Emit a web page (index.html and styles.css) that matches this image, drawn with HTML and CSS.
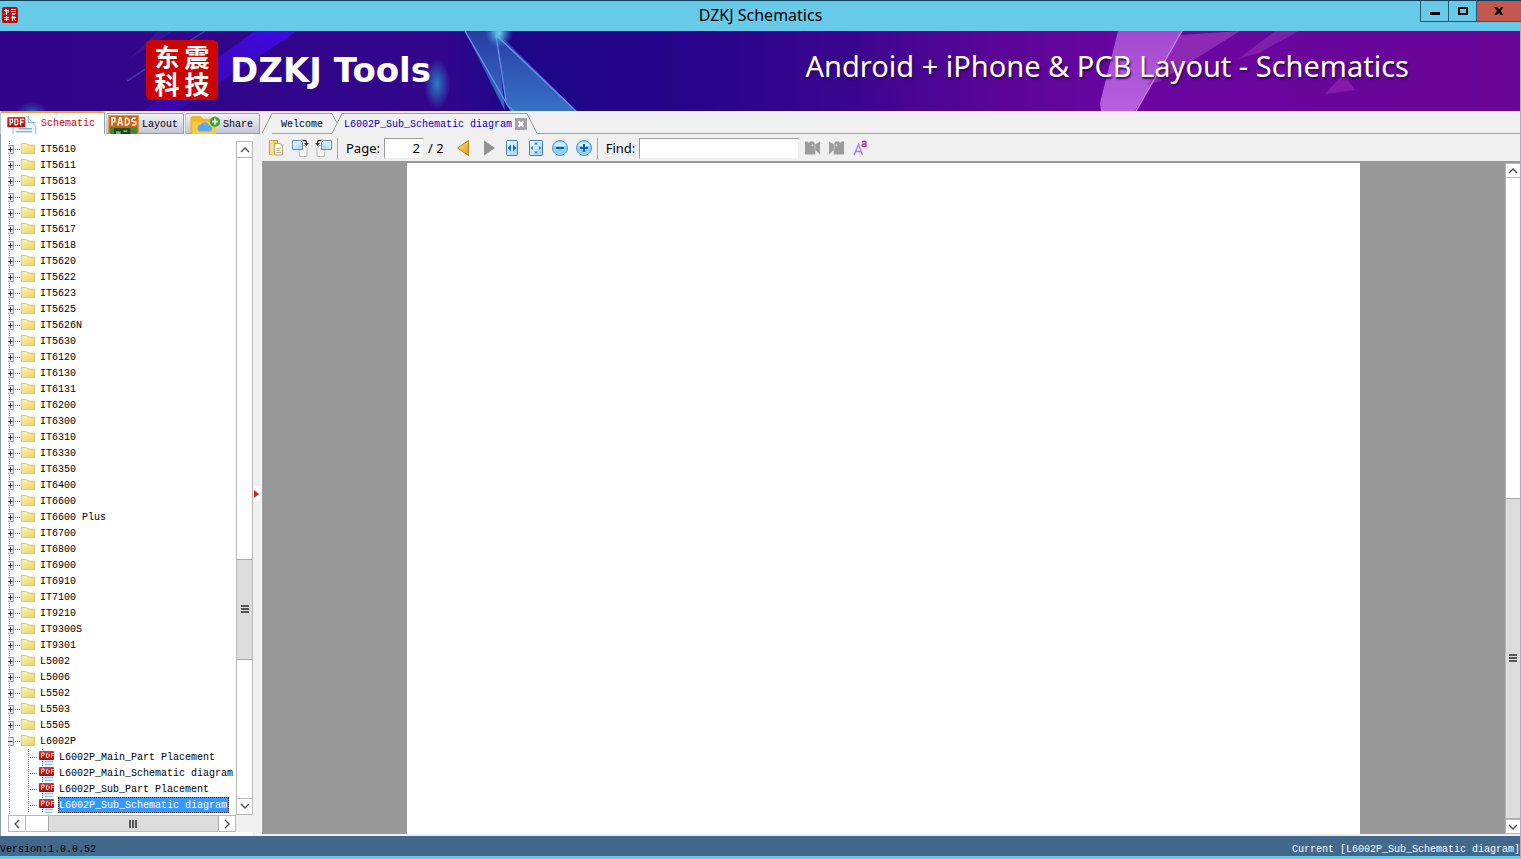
FILE: index.html
```html
<!DOCTYPE html>
<html lang="en">
<head>
<meta charset="utf-8">
<title>DZKJ Schematics</title>
<link rel="stylesheet" href="styles.css">
</head>
<body>
<svg class="defs" aria-hidden="true">
  <defs>
    <linearGradient id="gFolder" x1="0" y1="0" x2="1" y2="1"><stop offset="0" stop-color="#fff6b8"/><stop offset="1" stop-color="#ecd164"/></linearGradient>
    <linearGradient id="gBlue" x1="0" y1="0" x2="1" y2="1"><stop offset="0" stop-color="#f4fbff"/><stop offset="1" stop-color="#9fcff2"/></linearGradient>
    <linearGradient id="gGold" x1="0" y1="0" x2="1" y2="1"><stop offset="0" stop-color="#ffe97a"/><stop offset="1" stop-color="#d9981a"/></linearGradient>
    <linearGradient id="gRed" x1="0" y1="0" x2="0" y2="1"><stop offset="0" stop-color="#d93a3a"/><stop offset="1" stop-color="#a80a10"/></linearGradient>
    <symbol id="folder" viewBox="0 0 14 13"><path d="M.5 11.500v-10h5l1.500 1.500h6.500v8.500z" fill="url(#gFolder)" stroke="#dcc868"/></symbol>
    <symbol id="closed" viewBox="0 0 28 16"><path d="M1.500 0v16" stroke="#888" stroke-dasharray="1 1"/><path d="M7 8.500h6" stroke="#777" stroke-dasharray="1 1"/><path d="M0 4.500h5.500v8h-5.500" fill="#ececec" stroke="#999"/><path d="M0 8.500h4.500M2.500 6v5" stroke="#333"/><use href="#folder" x="13" y="1" width="14" height="13"/></symbol>
    <symbol id="opened" viewBox="0 0 28 16"><path d="M1.500 0v16" stroke="#888" stroke-dasharray="1 1"/><path d="M7 8.500h6" stroke="#777" stroke-dasharray="1 1"/><path d="M0 4.500h5.500v8h-5.500" fill="#e6e6e6" stroke="#999"/><path d="M0 8.500h4.500" stroke="#333"/><use href="#folder" x="13" y="1" width="14" height="13"/></symbol>
    <symbol id="leaf" viewBox="0 0 50 16"><path d="M1.500 0v16M20.500 0v16" stroke="#888" stroke-dasharray="1 1"/><path d="M22 8.500h8" stroke="#777" stroke-dasharray="1 1"/><path d="M34 1h7l5 3v12h-12z" fill="#e2f3fb"/><path d="M34.500 0v3M34.500 10v6" stroke="#555" stroke-dasharray="1 1"/><path d="M37 12.500h8M37 15.500h7" stroke="#86c6e6"/><rect x="31" y="2" width="15" height="9" rx="1" fill="url(#gRed)"/><path d="M33.500 9v-5h2.500v2.500h-2M38.500 4.500v4h1.500l1-1v-2l-1-1zM43.500 9v-4.500h2.500M43.500 6.500h2" fill="none" stroke="#fbdada"/></symbol>
    <symbol id="up" viewBox="0 0 10 6"><path d="M1 5l4-4 4 4" fill="none" stroke="#505050" stroke-width="1.400"/></symbol>
    <symbol id="down" viewBox="0 0 10 6"><path d="M1 1l4 4 4-4" fill="none" stroke="#505050" stroke-width="1.400"/></symbol>
    <symbol id="turn" viewBox="0 0 18 18"><path d="M8.500 6.500h5l2.500 3v8h-7.500z" fill="#fafafa" stroke="#b8b8b8"/><path d="M1.500 1.500h8l2 2v7h-10z" fill="url(#gBlue)" stroke="#5f8fbe"/><path d="M11.500 1.500h2.500q1.500 0 1.500 2.500" fill="none" stroke="#333" stroke-width="1.300"/><path d="M13 4h5l-2.500 3z" fill="#333"/></symbol>
    <symbol id="seek" viewBox="0 0 16 16"><path d="M0 1h3v1h2v-1h4l2 3 5-3v14l-5-5v5h-11z" fill="#9c9c9c"/><circle cx="8" cy="5" r="1" fill="#dcdcdc"/><path d="M10.500 4v6" stroke="#c4c4c4"/></symbol>
  </defs>
</svg>

<header class="titlebar">
  <svg class="app-icon" viewBox="0 0 16 16" aria-hidden="true"><rect width="16" height="16" rx="2" fill="#c20a0a"/><path d="M2 3.500h5M4 2v3h3M4.500 5v3M2 7.500l1-1M9 2.500h5M9 4.500h5M10 6.500h4M10 8l3-1M2 10.500h5M4.500 9v5M2 12.500h5M9 10.500h5M10.500 9v5M12 9v3l2 2" fill="none" stroke="#fff"/></svg>
  <h1>DZKJ Schematics</h1>
  <div class="window-buttons">
    <button aria-label="Minimize"><svg viewBox="0 0 10 8"><path d="M0 6.500h10" stroke="#000" stroke-width="3"/></svg></button>
    <button aria-label="Maximize"><svg viewBox="0 0 10 8"><path d="M1 1h8v6h-8z" fill="none" stroke="#000" stroke-width="2"/></svg></button>
    <button class="close" aria-label="Close"><svg viewBox="0 0 10 8"><path d="M0 0h3l2 2.500 2-2.500h2.500l-3 4 3 4h-3l-1.500-2.300-2 2.300h-3l3.200-4z"/></svg></button>
  </div>
</header>

<section class="banner">
  <svg class="banner-art" viewBox="0 0 1520 80" preserveAspectRatio="none" aria-hidden="true">
    <defs>
      <linearGradient id="bg"><stop offset="0" stop-color="#320489"/><stop offset=".29" stop-color="#31068c"/><stop offset=".34" stop-color="#1d0787"/><stop offset=".45" stop-color="#26048b"/><stop offset=".56" stop-color="#3a058f"/><stop offset=".66" stop-color="#5c0598"/><stop offset=".75" stop-color="#6a05a0"/><stop offset="1" stop-color="#6a0598"/></linearGradient>
      <linearGradient id="beam" x1="1" y1="0" x2="0" y2="1"><stop offset="0" stop-color="#4108e8"/><stop offset="1" stop-color="#3b0bb5" stop-opacity=".5"/></linearGradient>
      <linearGradient id="shard" x1="0" y1="0" x2="0" y2="1"><stop offset="0" stop-color="#2a3ba6"/><stop offset="1" stop-color="#3672c4"/></linearGradient>
      <linearGradient id="pink" x1="0" y1="0" x2="0" y2="1"><stop offset="0" stop-color="#a44ad0"/><stop offset="1" stop-color="#b85ee0"/></linearGradient>
      <radialGradient id="glow"><stop offset="0" stop-color="#2b7cc4"/><stop offset="1" stop-color="#2b7cc4" stop-opacity="0"/></radialGradient>
      <radialGradient id="star"><stop offset="0" stop-color="#6be0f0"/><stop offset="1" stop-color="#3d9fd0" stop-opacity="0"/></radialGradient>
    </defs>
    <rect width="1520" height="80" fill="url(#bg)"/>
    <path d="M255 0h42l-120 80h-34z" fill="url(#beam)"/>
    <path d="M205 0l-78 50" stroke="#5a45b8" stroke-width="1.500" opacity=".7"/>
    <path d="M158 0h16l-45 28z" fill="#4520a0" opacity=".5"/>
    <ellipse cx="437" cy="53" rx="13" ry="25" fill="url(#glow)"/>
    <ellipse cx="32" cy="80" rx="16" ry="9" fill="url(#glow)" opacity=".6"/>
    <path d="M465 0h31l9 80-40-80z" fill="url(#shard)"/>
    <path d="M496 0l80 80h-66l-4-10z" fill="url(#shard)"/>
    <path d="M465 0l43 75 6 5M496 4l10 66M496 4l80 76" fill="none" stroke="#668af0" stroke-width="1.500"/>
    <circle cx="499" cy="2" r="14" fill="url(#star)"/>
    <path d="M1118 0h64l-47 80h-34l-1-8z" fill="url(#pink)"/>
    <path d="M1181 4l59-4-80 50-13 4z" fill="#9a36ba" opacity=".75"/>
    <path d="M1275 0h24l-40 22-21 6z" fill="#8526ac" opacity=".8"/>
    <path d="M1182 0l-46 80" stroke="#cf7ae0" stroke-width="1.500"/>
    <path d="M1343 43l12 16-30 4z" fill="#8d25b2" opacity=".7"/>
  </svg>
  <div class="logo" lang="zh"><span>东</span><span>震</span><span>科</span><span>技</span></div>
  <strong class="brand">DZKJ Tools</strong>
  <p class="tagline">Android + iPhone &amp; PCB Layout - Schematics</p>
</section>

<main class="workspace">
  <aside class="sidebar">
    <nav class="side-tabs">
      <button class="side-tab current"><svg viewBox="0 0 32 20" aria-hidden="true"><path d="M5 1h18l7 8v11h-25z" fill="#eef7fc"/><path d="M22 1v7h8M6 14v6M20 1l10 11v8" fill="none" stroke="#8cb9d6"/><path d="M12 14.500h14M9 17.500h17" stroke="#74b5dc" stroke-width="1.500"/><rect y="2" width="19" height="11" rx="1" fill="url(#gRed)"/><path d="M3 11v-6.500h2.500v3.500h-2.500M8 4.500v6h2l1-1v-4l-1-1zM14 11v-6.500h3.500M14 7.500h3" fill="none" stroke="#fff" stroke-width="1.200"/></svg>Schematic</button>
      <button class="side-tab"><svg viewBox="0 0 32 20" aria-hidden="true"><rect width="32" height="20" fill="#c8661b"/><rect x=".5" y=".5" width="31" height="19" fill="none" stroke="#e59a55"/><path d="M4 11v-8h3v4h-3M10 11l2-8h1l2 8M11 8.500h3M18 3.500v7h2l2-2v-3l-2-2zM29 3.500h-3l-1 1v2l4 1v2l-1 1h-3" fill="none" stroke="#fff2dc" stroke-width="1.600"/><path d="M2 13h28v7h-28z" fill="#3d8b2f"/><path d="M6 14h17v6h-17z" fill="#23401f"/><path d="M8 17h5v3h-5zM16 16h4v2h-4z" fill="#75b552"/></svg>Layout</button>
      <button class="side-tab share"><svg viewBox="0 0 32 20" aria-hidden="true"><path d="M0 3l2-2h9l3 3h13v16h-25l-2-2z" fill="#f1b52c"/><path d="M2 7h25v13h-25z" fill="#fbc943"/><path d="M9 17a4 4 0 0 1 2-7 5 5 0 0 1 9 1 3.500 3.500 0 0 1 2 6z" fill="#5aa9ea"/><circle cx="26" cy="7" r="5.500" fill="#43a72f"/><path d="M26 4v6M23 7h6" stroke="#fff" stroke-width="2"/></svg>Share</button>
    </nav>
    <div class="side-body">
      <div class="tree-box">
        <ul class="tree">
          <li><svg><use href="#closed"/></svg><span>IT5610</span></li>
          <li><svg><use href="#closed"/></svg><span>IT5611</span></li>
          <li><svg><use href="#closed"/></svg><span>IT5613</span></li>
          <li><svg><use href="#closed"/></svg><span>IT5615</span></li>
          <li><svg><use href="#closed"/></svg><span>IT5616</span></li>
          <li><svg><use href="#closed"/></svg><span>IT5617</span></li>
          <li><svg><use href="#closed"/></svg><span>IT5618</span></li>
          <li><svg><use href="#closed"/></svg><span>IT5620</span></li>
          <li><svg><use href="#closed"/></svg><span>IT5622</span></li>
          <li><svg><use href="#closed"/></svg><span>IT5623</span></li>
          <li><svg><use href="#closed"/></svg><span>IT5625</span></li>
          <li><svg><use href="#closed"/></svg><span>IT5626N</span></li>
          <li><svg><use href="#closed"/></svg><span>IT5630</span></li>
          <li><svg><use href="#closed"/></svg><span>IT6120</span></li>
          <li><svg><use href="#closed"/></svg><span>IT6130</span></li>
          <li><svg><use href="#closed"/></svg><span>IT6131</span></li>
          <li><svg><use href="#closed"/></svg><span>IT6200</span></li>
          <li><svg><use href="#closed"/></svg><span>IT6300</span></li>
          <li><svg><use href="#closed"/></svg><span>IT6310</span></li>
          <li><svg><use href="#closed"/></svg><span>IT6330</span></li>
          <li><svg><use href="#closed"/></svg><span>IT6350</span></li>
          <li><svg><use href="#closed"/></svg><span>IT6400</span></li>
          <li><svg><use href="#closed"/></svg><span>IT6600</span></li>
          <li><svg><use href="#closed"/></svg><span>IT6600 Plus</span></li>
          <li><svg><use href="#closed"/></svg><span>IT6700</span></li>
          <li><svg><use href="#closed"/></svg><span>IT6800</span></li>
          <li><svg><use href="#closed"/></svg><span>IT6900</span></li>
          <li><svg><use href="#closed"/></svg><span>IT6910</span></li>
          <li><svg><use href="#closed"/></svg><span>IT7100</span></li>
          <li><svg><use href="#closed"/></svg><span>IT9210</span></li>
          <li><svg><use href="#closed"/></svg><span>IT9300S</span></li>
          <li><svg><use href="#closed"/></svg><span>IT9301</span></li>
          <li><svg><use href="#closed"/></svg><span>L5002</span></li>
          <li><svg><use href="#closed"/></svg><span>L5006</span></li>
          <li><svg><use href="#closed"/></svg><span>L5502</span></li>
          <li><svg><use href="#closed"/></svg><span>L5503</span></li>
          <li><svg><use href="#closed"/></svg><span>L5505</span></li>
          <li><svg><use href="#opened"/></svg><span>L6002P</span></li>
          <li class="leaf"><svg><use href="#leaf"/></svg><span>L6002P_Main_Part Placement</span></li>
          <li class="leaf"><svg><use href="#leaf"/></svg><span>L6002P_Main_Schematic diagram</span></li>
          <li class="leaf"><svg><use href="#leaf"/></svg><span>L6002P_Sub_Part Placement</span></li>
          <li class="leaf selected"><svg><use href="#leaf"/></svg><span>L6002P_Sub_Schematic diagram</span></li>
          <li><svg><use href="#closed"/></svg></li>
        </ul>
        <div class="vscroll tree-scroll">
          <button aria-label="Scroll up"><svg viewBox="0 0 10 6"><use href="#up"/></svg></button>
          <div class="before"></div>
          <div class="thumb"><i></i></div>
          <div class="after"></div>
          <button aria-label="Scroll down"><svg viewBox="0 0 10 6"><use href="#down"/></svg></button>
        </div>
        <div class="hscroll">
          <button aria-label="Scroll left"><svg viewBox="0 0 6 10"><path d="M5 1l-4 4 4 4" fill="none" stroke="#505050" stroke-width="1.400"/></svg></button>
          <div class="lead"></div>
          <div class="thumb"><i></i></div>
          <button aria-label="Scroll right"><svg viewBox="0 0 6 10"><path d="M1 1l4 4-4 4" fill="none" stroke="#505050" stroke-width="1.400"/></svg></button>
        </div>
        <div class="corner"></div>
      </div>
      <button class="splitter" aria-label="Collapse panel"><svg viewBox="0 0 7 15"><path d="M0 0h7v15h-7z" fill="#fff"/><path d="M1 4l5 4-5 4z" fill="#d22"/></svg></button>
    </div>
  </aside>

  <section class="document">
    <nav class="doc-tabs">
      <svg class="slope" viewBox="0 0 10 21" aria-hidden="true"><path d="M0 20.500l10-20" fill="none" stroke="#8fa5ad"/></svg>
      <button class="doc-tab">Welcome</button>
      <svg class="joint" viewBox="0 0 10 21" aria-hidden="true"><path d="M0 .5l5 10M0 20.500l10-20" fill="none" stroke="#8fa5ad"/></svg>
      <button class="doc-tab current">L6002P_Sub_Schematic diagram</button>
      <button class="tab-close" aria-label="Close tab"><svg viewBox="0 0 12 12"><rect width="12" height="12" fill="#a3a3a3"/><path d="M3.500 3.500l5 5M8.500 3.500l-5 5" stroke="#fff" stroke-width="2"/></svg></button>
      <svg class="slope" viewBox="0 0 10 21" aria-hidden="true"><path d="M0 .5l10 20" fill="none" stroke="#8fa5ad"/></svg>
      <span class="tab-rest"></span>
    </nav>
    <div class="toolbar">
      <button aria-label="Copy"><svg viewBox="0 0 18 18"><path d="M2.500 1.500h8v14h-8z" fill="#f0c46a" stroke="#d19a3b"/><path d="M3 1l4 2v14l-4-2z" fill="#fbdc8c"/><path d="M7.500 4.500h5.500l2.500 2.500v9h-8z" fill="#fffbe9" stroke="#b7a26b"/><path d="M9.500 9.500h4M9.500 11.500h4M9.500 13.500h4" stroke="#b9b195"/></svg></button>
      <button aria-label="Rotate clockwise"><svg viewBox="0 0 18 18"><use href="#turn"/></svg></button>
      <button aria-label="Rotate counterclockwise"><svg class="mirror" viewBox="0 0 18 18"><use href="#turn"/></svg></button>
      <span class="sep"></span>
      <label for="page">Page:</label>
      <input id="page" class="page-field" type="text" value="2">
      <span class="total">/ 2</span>
      <button aria-label="Previous page"><svg viewBox="0 0 18 18"><path d="M13.500 1.500v15l-11-7.500z" fill="url(#gGold)" stroke="#b98420"/></svg></button>
      <button aria-label="Next page"><svg viewBox="0 0 18 18"><path d="M5 1.500v15l11-7.500z" fill="#929292"/></svg></button>
      <button aria-label="Fit width"><svg viewBox="0 0 18 18"><rect x="3.500" y="1.500" width="11" height="15" rx="1" fill="url(#gBlue)" stroke="#3d7fb5"/><path d="M8 5.500v7l-3.500-3.500zM10 5.500v7l3.500-3.500z" fill="#1670b4"/></svg></button>
      <button aria-label="Fit page"><svg viewBox="0 0 18 18"><rect x="2.500" y="1.500" width="13" height="15" rx="1" fill="url(#gBlue)" stroke="#3d7fb5"/><path d="M9 3l2 2.500h-4zM9 15l2-2.500h-4zM3.500 9l2.500-2v4zM14.500 9l-2.500-2v4z" fill="#3181bd"/></svg></button>
      <button aria-label="Zoom out"><svg viewBox="0 0 18 18"><circle cx="9" cy="9" r="7.500" fill="#8fd2f7" stroke="#5d93bc"/><path d="M3 7a6.500 6 0 0 1 12 0z" fill="#d3effd"/><path d="M5 9h8" stroke="#12609c" stroke-width="2"/></svg></button>
      <button aria-label="Zoom in"><svg viewBox="0 0 18 18"><circle cx="9" cy="9" r="7.500" fill="#8fd2f7" stroke="#5d93bc"/><path d="M3 7a6.500 6 0 0 1 12 0z" fill="#d3effd"/><path d="M5 9h8M9 5v8" stroke="#12609c" stroke-width="2"/></svg></button>
      <span class="sep"></span>
      <label for="find">Find:</label>
      <input id="find" class="find-field" type="text">
      <button aria-label="Find previous"><svg class="small" viewBox="0 0 16 16"><use href="#seek"/></svg></button>
      <button aria-label="Find next"><svg class="small mirror" viewBox="0 0 16 16"><use href="#seek"/></svg></button>
      <button aria-label="Match case"><svg viewBox="0 0 18 18"><path d="M3 16l4.500-10.500 4 10.500M4.500 12.500h6" fill="none" stroke="#9b83ee" stroke-width="1.400"/><path d="M11 3q4-2 4 1v4M15 5q-4-.5-4 1.500t4 .2" fill="none" stroke="#c53aa5" stroke-width="1.500"/></svg></button>
    </div>
    <div class="viewer">
      <div class="canvas"><div class="sheet"></div></div>
      <div class="vscroll page-scroll">
        <button aria-label="Scroll up"><svg viewBox="0 0 10 6"><use href="#up"/></svg></button>
        <div class="before"></div>
        <div class="thumb"><i></i></div>
        <button aria-label="Scroll down"><svg viewBox="0 0 10 6"><use href="#down"/></svg></button>
      </div>
    </div>
  </section>
</main>

<footer class="status"><span>Version:1.0.0.52</span><span class="where">Current [L6002P_Sub_Schematic diagram]</span></footer>
</body>
</html>
```
FILE: styles.css
```css
* { box-sizing: border-box; }

body {
  margin: 0;
  height: 100vh;
  display: flex;
  flex-direction: column;
  background: #66cae8;
  font: 10px/16px "Liberation Mono", monospace;
  color: #000;
  overflow: hidden;
}

button { padding: 0; border: 0; background: none; font: inherit; color: inherit; }
svg { display: block; flex: none; }
.defs { position: absolute; width: 0; height: 0; }

.titlebar {
  display: grid;
  grid-template-columns: 1fr auto 1fr;
  height: 31px;
  border-top: 1px solid #12405a;
}
.titlebar h1 { margin: 0; font: 16px/28px "Noto Sans", sans-serif; }
.app-icon { width: 16px; height: 16px; margin: 6px 2px; }
.window-buttons { display: flex; justify-self: end; height: 21px; }
.window-buttons button {
  display: flex;
  align-items: center;
  justify-content: center;
  width: 28px;
  border: 1px solid #1f5b73;
  border-width: 0 0 1px 1px;
}
.window-buttons svg { width: 10px; height: 8px; }
.window-buttons .close { width: 45px; background: #c4574e; }

.banner {
  position: relative;
  display: flex;
  align-items: center;
  height: 80px;
  margin-right: 1px;
  padding: 0 111px 2px 146px;
  color: #fff;
}
.banner-art { position: absolute; inset: 0; width: 100%; height: 100%; }
.logo, .brand, .tagline { position: relative; }
.logo {
  display: grid;
  grid-template-columns: 28px 28px;
  column-gap: 2px;
  justify-content: center;
  align-content: center;
  width: 72px;
  height: 60px;
  margin-right: 12px;
  border-radius: 5px;
  background: #cb0505;
  text-align: center;
  font: bold 25px/27px "Noto Sans CJK SC", sans-serif;
}
.brand { font: bold 34px/44px "DejaVu Sans", sans-serif; white-space: nowrap; }
.tagline {
  margin: 0 0 8px auto;
  font: 29px/36px "Noto Sans", sans-serif;
  text-shadow: 1px 2px 2px #2c0850;
  white-space: nowrap;
}

.workspace { flex: 1; display: flex; min-height: 0; margin-right: 1px; background: #f0f0f0; }

.sidebar { display: flex; flex-direction: column; width: 262px; }
.side-tabs { display: flex; align-items: flex-end; gap: 1px; height: 23px; }
.side-tab {
  display: flex;
  align-items: center;
  gap: 3px;
  width: 78px;
  height: 21px;
  padding: 2px 0 0 1px;
  border: 1px solid #8da2ad;
  border-left-color: #b9c6cc;
  border-radius: 2px 2px 0 0;
  background: linear-gradient(#f4f4f8, #c4c5da);
}
.side-tab svg { width: 31px; height: 19px; }
.side-tab.share { width: 75px; padding-left: 4px; gap: 2px; }
.side-tab.current {
  width: 105px;
  height: 23px;
  padding: 1px 0 0 6px;
  border-width: 2px 1px 0;
  border-top-color: #f5a32c;
  background: #fff;
  color: #d00000;
}
.side-body { flex: 1; display: flex; min-height: 0; border-left: 1px solid #8d9ba3; background: #fff; }
.tree-box {
  flex: 1;
  display: grid;
  grid-template: minmax(0, 1fr) 17px / minmax(0, 1fr) 17px;
  margin: 7px 0 4px 7px;
  min-width: 0;
}
.tree { margin: 0; padding: 0; list-style: none; overflow: hidden; line-height: 18px; }
.tree li { display: flex; gap: 3px; height: 16px; white-space: nowrap; }
.tree svg { width: 28px; height: 16px; }
.tree span { padding: 0 1px; }
.tree .leaf { gap: 0; }
.tree .leaf svg { width: 50px; }
.tree .selected span { padding-right: 2px; outline: 1px dotted #222; outline-offset: -1px; background: #3399ff; color: #fff; }

.vscroll { display: flex; flex-direction: column; border: 1px solid #b8b8b8; border-width: 0 1px; background: #fff; }
.vscroll button, .hscroll button { display: flex; align-items: center; justify-content: center; }
.vscroll button { height: 17px; border: 1px solid #b8b8b8; border-width: 1px 0; }
.vscroll svg { width: 10px; height: 6px; }
.thumb { display: flex; align-items: center; justify-content: center; background: #dcdcdc; border: 1px solid #a8a8a8; }
.vscroll .thumb { border-width: 1px 0; }
.thumb i { width: 8px; height: 8px; background: repeating-linear-gradient(#555 0 2px, #dcdcdc 2px 3px); }
.tree-scroll .before { flex: 403; }
.tree-scroll .thumb { flex: 99; }
.tree-scroll .after { flex: 139; }
.corner { background: #f0f0f0; }

.hscroll { display: flex; border: 1px solid #b8b8b8; background: #fff; }
.hscroll button { width: 16px; }
.hscroll svg { width: 6px; height: 10px; }
.hscroll .lead { flex: 22; border-left: 1px solid #b8b8b8; }
.hscroll .thumb { flex: 172; border-width: 0 1px; }
.hscroll i { background: repeating-linear-gradient(90deg, #555 0 2px, #dcdcdc 2px 3px); }

.splitter { width: 9px; border-right: 1px solid #fff; background: #eef0f1; }
.splitter svg { width: 7px; height: 15px; margin-top: 16px; }

.document { flex: 1; display: flex; flex-direction: column; min-width: 0; }
.doc-tabs { display: flex; height: 23px; padding-top: 2px; }
.slope, .joint { width: 10px; height: 21px; }
.doc-tab { border-top: 1px solid #8fa5ad; border-bottom: 1px solid #8fa5ad; padding: 3px 9px 0; height: 21px; }
.doc-tab.current { padding: 3px 3px 0 2px; border-bottom-color: transparent; color: #0000c8; }
.tab-close { border-top: 1px solid #8fa5ad; }
.tab-close svg { width: 12px; height: 12px; }
.tab-rest { flex: 1; border-bottom: 1px solid #8fa5ad; }

.toolbar {
  display: flex;
  align-items: center;
  height: 29px;
  padding: 1px 0 0 2px;
  border-bottom: 2px solid #999;
  font: 13px/20px "Noto Sans", sans-serif;
}
.toolbar button { display: flex; justify-content: center; width: 24px; }
.toolbar svg { width: 18px; height: 18px; }
.toolbar .small { width: 15px; height: 16px; }
.mirror { transform: scaleX(-1); }
.sep { width: 1px; height: 21px; margin: 0 8px 0 1px; background: #a5a5a5; }
.toolbar input {
  height: 21px;
  border: 1px solid #a0a0a0;
  border-color: #9a9a9a #eee #eee #9a9a9a;
  background: #fff;
  font: inherit;
}
.toolbar .page-field { width: 40px; margin: 0 4px; padding: 0 3px; text-align: right; }
.toolbar .find-field { width: 160px; margin: 0 1px 0 4px; }
.total { margin-right: 8px; }

.viewer { flex: 1; display: flex; min-height: 0; margin-bottom: 2px; }
.canvas { flex: 1; padding: 0 145px; background: #999; }
.sheet { height: 100%; background: #fff; }
.page-scroll { width: 15px; border-right: 0; }
.page-scroll .before { flex: 321; }
.page-scroll .thumb { flex: 321; }
.page-scroll button { height: 15px; }

.status {
  display: flex;
  justify-content: space-between;
  align-items: flex-end;
  height: 20px;
  margin: 0 1px 3px 0;
  background: #42688c;
  line-height: 13px;
}
.status .where { color: #fff; }
```
